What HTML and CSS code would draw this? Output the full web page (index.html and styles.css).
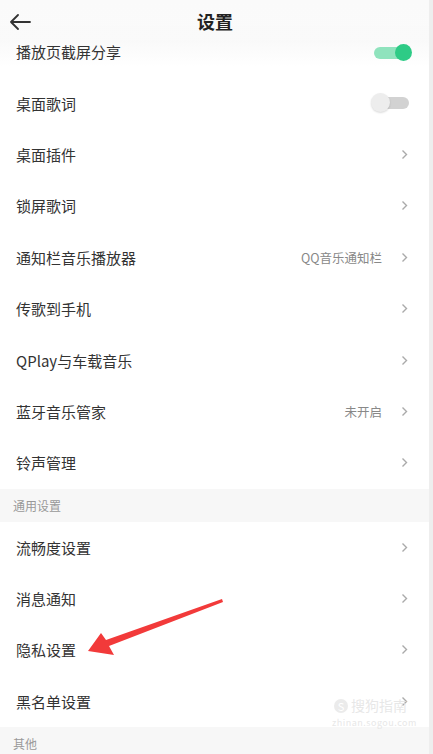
FILE: index.html
```html
<!DOCTYPE html>
<html lang="zh-CN">
<head>
    <meta charset="UTF-8">
    <meta name="viewport" content="width=device-width, initial-scale=1.0">
    <title>设置</title>
    <link rel="stylesheet" href="styles.css">
</head>
<body>
    <div class="page">
        <header class="topbar">
            <svg class="back" width="22" height="16" viewBox="0 0 22 16">
                <path d="M21 8H2M9 1L2 8l7 7" fill="none" stroke="#333" stroke-width="1.8" stroke-linecap="round" stroke-linejoin="round"/>
            </svg>
            <h1>设置</h1>
        </header>

        <div class="list">
            <div class="row">
                <span class="label">播放页截屏分享</span>
                <span class="switch on"><i></i></span>
            </div>
            <div class="row">
                <span class="label">桌面歌词</span>
                <span class="switch"><i></i></span>
            </div>
            <div class="row">
                <span class="label">桌面插件</span>
                <svg class="chev" width="7" height="11" viewBox="0 0 7 11"><path d="M1.5 1.5l4 4-4 4" fill="none" stroke="#aaa" stroke-width="1.4"/></svg>
            </div>
            <div class="row">
                <span class="label">锁屏歌词</span>
                <svg class="chev" width="7" height="11" viewBox="0 0 7 11"><path d="M1.5 1.5l4 4-4 4" fill="none" stroke="#aaa" stroke-width="1.4"/></svg>
            </div>
            <div class="row">
                <span class="label">通知栏音乐播放器</span>
                <span class="value">QQ音乐通知栏</span>
                <svg class="chev" width="7" height="11" viewBox="0 0 7 11"><path d="M1.5 1.5l4 4-4 4" fill="none" stroke="#aaa" stroke-width="1.4"/></svg>
            </div>
            <div class="row">
                <span class="label">传歌到手机</span>
                <svg class="chev" width="7" height="11" viewBox="0 0 7 11"><path d="M1.5 1.5l4 4-4 4" fill="none" stroke="#aaa" stroke-width="1.4"/></svg>
            </div>
            <div class="row">
                <span class="label">QPlay与车载音乐</span>
                <svg class="chev" width="7" height="11" viewBox="0 0 7 11"><path d="M1.5 1.5l4 4-4 4" fill="none" stroke="#aaa" stroke-width="1.4"/></svg>
            </div>
            <div class="row">
                <span class="label">蓝牙音乐管家</span>
                <span class="value">未开启</span>
                <svg class="chev" width="7" height="11" viewBox="0 0 7 11"><path d="M1.5 1.5l4 4-4 4" fill="none" stroke="#aaa" stroke-width="1.4"/></svg>
            </div>
            <div class="row">
                <span class="label">铃声管理</span>
                <svg class="chev" width="7" height="11" viewBox="0 0 7 11"><path d="M1.5 1.5l4 4-4 4" fill="none" stroke="#aaa" stroke-width="1.4"/></svg>
            </div>

            <div class="section">通用设置</div>
            <div class="row">
                <span class="label">流畅度设置</span>
                <svg class="chev" width="7" height="11" viewBox="0 0 7 11"><path d="M1.5 1.5l4 4-4 4" fill="none" stroke="#aaa" stroke-width="1.4"/></svg>
            </div>
            <div class="row">
                <span class="label">消息通知</span>
                <svg class="chev" width="7" height="11" viewBox="0 0 7 11"><path d="M1.5 1.5l4 4-4 4" fill="none" stroke="#aaa" stroke-width="1.4"/></svg>
            </div>
            <div class="row">
                <span class="label">隐私设置</span>
                <svg class="chev" width="7" height="11" viewBox="0 0 7 11"><path d="M1.5 1.5l4 4-4 4" fill="none" stroke="#aaa" stroke-width="1.4"/></svg>
            </div>
            <div class="row">
                <span class="label">黑名单设置</span>
                <svg class="chev" width="7" height="11" viewBox="0 0 7 11"><path d="M1.5 1.5l4 4-4 4" fill="none" stroke="#aaa" stroke-width="1.4"/></svg>
            </div>

            <div class="section">其他</div>
        </div>

        <!-- annotation arrow drawn over the list -->
        <svg class="arrow" width="433" height="754" viewBox="0 0 433 754">
            <polygon points="88,651 101,633 106,640 222,599 223,602 109,646 114,655" fill="#f23a3a"/>
        </svg>

        <div class="watermark">
            <span class="wm-logo">S</span><span class="wm-name">搜狗指南</span>
            <div class="wm-url">zhinan.sogou.com</div>
        </div>
    </div>
</body>
</html>
```

FILE: styles.css
```css
body {
    margin: 0;
    padding: 0;
    background: #ffffff;
    font-family: "Noto Sans CJK SC", "Noto Sans", sans-serif;
    color: #333333;
    overflow: hidden;
}
.page {
    position: relative;
    width: 429px;
    height: 754px;
    border-right: 4px solid #eeeeee;
    overflow: hidden;
}
.topbar {
    position: relative;
    z-index: 1;
    height: 40px;
    display: flex;
    align-items: center;
    justify-content: center;
    background: linear-gradient(#fafafa, rgba(250, 250, 250, 0.9));
}
.topbar h1 {
    margin: 0;
    font-size: 18px;
    font-weight: bold;
    color: #222222;
    line-height: 1;
    margin-left: 1px;
    margin-top: 2px;
}
.back {
    position: absolute;
    left: 9px;
    top: 14px;
}
.list {
    margin-top: -14px;
}
.row {
    height: 51.4px;
    display: flex;
    align-items: center;
    padding: 0 22px 0 16px;
    box-sizing: border-box;
}
.list .row:first-child {
    background: linear-gradient(#f6f6f6, #ffffff 80%);
}
.label {
    flex: 1;
    font-size: 15px;
    color: #333333;
}
.value {
    font-size: 12.5px;
    color: #888888;
    margin-right: 19px;
}
.chev {
    display: block;
    margin-right: -1px;
}
.switch {
    position: relative;
    width: 37px;
    height: 12px;
    border-radius: 6px;
    background: #d2d2d2;
    margin-right: -2px;
}
.switch i {
    position: absolute;
    left: -1px;
    top: -4px;
    width: 19px;
    height: 19px;
    border-radius: 50%;
    background: #ededed;
    box-shadow: 0 1px 2px rgba(0, 0, 0, 0.15);
}
.switch.on {
    background: #8fe3bd;
    margin-top: 3px;
    margin-right: -4px;
}
.switch.on i {
    left: auto;
    right: -1px;
    top: -3px;
    width: 17px;
    height: 17px;
    background: #2ecb86;
    box-shadow: none;
}
.section {
    height: 33px;
    background: #f7f7f7;
    font-size: 12px;
    color: #999999;
    padding-left: 13px;
    display: flex;
    align-items: center;
}
.arrow {
    position: absolute;
    left: 0;
    top: 0;
    pointer-events: none;
}
.watermark {
    position: absolute;
    left: 334px;
    top: 698px;
    color: rgba(225, 225, 225, 0.8);
    font-size: 14px;
    line-height: 1;
}
.wm-logo {
    display: inline-block;
    width: 14px;
    height: 14px;
    border-radius: 50%;
    background: rgba(230, 230, 230, 0.8);
    color: #ffffff;
    font-size: 11px;
    text-align: center;
    line-height: 14px;
    margin-right: 3px;
}
.wm-url {
    font-size: 9px;
    margin-top: 5px;
    letter-spacing: 0.5px;
    margin-left: -2px;
}
```
